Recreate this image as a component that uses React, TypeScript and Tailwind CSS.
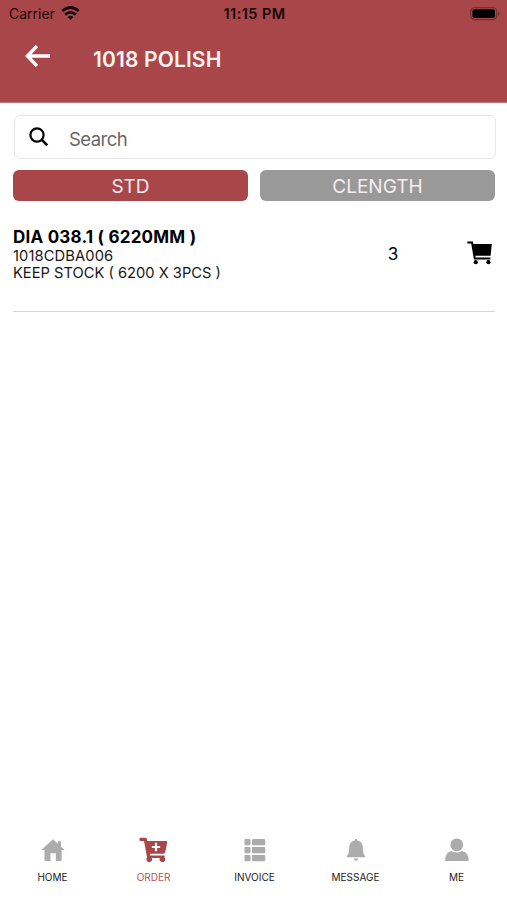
import type { ReactNode } from "react";

const HomeIcon = () => (
  <svg width="24" height="24" viewBox="0 0 24 24" fill="currentColor">
    <path d="M12 1.2 L17 5.8 V3.2 H20 V8.7 L23.7 12 H20.6 V22.2 Q20.6 23 19.8 23 H14.8 V15.3 H9.4 V23 H4.3 Q3.5 23 3.5 22.2 V12 H0.3 Z" />
  </svg>
);

const OrderIcon = () => (
  <svg width="29" height="26" viewBox="0 0 29 26" fill="currentColor">
    <path d="M1.5 0.8 H6.3 Q7.5 0.8 7.9 2.2 L8.2 3.9 H27.2 Q28.6 3.9 28.3 5.3 L26.1 15.6 Q25.8 16.7 24.6 16.7 H10.8 L11.2 18.4 H24.6 Q25.9 18.4 25.7 19.6 L25.5 20.5 A2.8 2.8 0 1 1 21 20.9 H12.6 A2.8 2.8 0 1 1 8.1 20.6 L5 4 H1.5 Q0.5 4 0.5 3 V1.8 Q0.5 0.8 1.5 0.8 Z" />
    <path d="M17 5.8 V14.2 M12.8 10 H21.2" stroke="white" strokeWidth="2.2" />
  </svg>
);

const InvoiceIcon = () => (
  <svg width="22" height="24" viewBox="0 0 22 24" fill="currentColor">
    <rect x="0.5" y="1" width="6" height="6.2" rx="1" />
    <rect x="8" y="1" width="13.2" height="6.2" rx="1" />
    <rect x="0.5" y="9" width="6" height="6.2" rx="1" />
    <rect x="8" y="9" width="13.2" height="6.2" rx="1" />
    <rect x="0.5" y="17" width="6" height="6.2" rx="1" />
    <rect x="8" y="17" width="13.2" height="6.2" rx="1" />
  </svg>
);

const BellIcon = () => (
  <svg width="20" height="24" viewBox="0 0 20 24" fill="currentColor">
    <path d="M10 0.8 Q11.3 0.8 11.3 2.4 Q16.5 3.6 16.8 9 C17 14.5 17.2 16 19.2 18.2 Q19.7 19.3 18.6 19.3 H1.4 Q0.3 19.3 0.8 18.2 C2.8 16 3 14.5 3.2 9 Q3.5 3.6 8.7 2.4 Q8.7 0.8 10 0.8 Z" />
    <path d="M7.8 20.6 H12.2 Q11.8 23 10 23 Q8.2 23 7.8 20.6 Z" />
  </svg>
);

const PersonIcon = () => (
  <svg width="24" height="24" viewBox="0 0 24 24" fill="currentColor">
    <circle cx="11.8" cy="6.8" r="6.4" />
    <path d="M0.2 22 C0.2 17 2.8 13.6 6.5 12.9 Q11.8 16.2 17.1 12.9 C21 13.6 23.7 17 23.7 22 Q23.7 23.1 22.6 23.1 H1.3 Q0.2 23.1 0.2 22 Z" />
  </svg>
);

const CartIcon = () => (
  <svg width="26" height="24" viewBox="0 0 26 24">
    <path d="M0.3 1.4 H5 L7.8 17.6 H23.4" fill="none" stroke="black" strokeWidth="2" />
    <path d="M5.4 3 H24.8 L23.6 14.8 H7.5 Z" />
    <circle cx="8.8" cy="21.2" r="2.1" />
    <circle cx="21.4" cy="21.2" r="2.1" />
  </svg>
);

const StatusBar = () => (
  <div className="flex h-[27px] items-center justify-between pl-[9px] pr-[7px] text-[14px] text-[#170606]">
    <div className="flex w-40 items-center gap-[6px]">
      <span>Carrier</span>
      <svg width="19" height="14" viewBox="0 0 19 14" fill="none" stroke="currentColor" strokeWidth="2.7" className="-mt-px">
        <path d="M1.2 5 Q9.5 -2 17.8 5" />
        <path d="M4.1 8.6 Q9.5 4 14.9 8.6" />
        <path d="M6.6 11 Q9.5 8.3 12.4 11 L9.5 14 Z" fill="currentColor" stroke="none" />
      </svg>
    </div>
    <span className="text-[14.5px] font-semibold tracking-[0.03em]">11:15 PM</span>
    <div className="flex w-40 justify-end">
      <svg width="30" height="14" viewBox="0 0 30 14">
        <rect x="0.8" y="0.6" width="25.8" height="12" rx="3.6" fill="none" stroke="#713034" strokeWidth="1.2" />
        <rect x="2.4" y="2.2" width="22.6" height="8.8" rx="2" fill="black" />
        <path d="M28 4.5 Q29.6 5 29.6 6.6 Q29.6 8.2 28 8.7 Z" fill="#713034" />
      </svg>
    </div>
  </div>
);

const Header = () => (
  <header className="h-[103px] border-b border-[#bd777a] bg-[#a94649]">
    <StatusBar />
    <div className="flex h-16 items-center pl-[25px] text-white">
      <svg width="26" height="24" viewBox="0 0 26 24" fill="none" stroke="currentColor" strokeWidth="3.4" className="-mt-[6px]">
        <path d="M25 12 H2.5 M12 2 L2.5 12 L12 22" />
      </svg>
      <h1 className="ml-[42px] mt-px text-[21px] font-semibold tracking-[0.006em] text-[#fdf3f1]">1018 POLISH</h1>
    </div>
  </header>
);

const Tab = ({ label, icon, active = false }: { label: string; icon: ReactNode; active?: boolean }) => (
  <div className={`flex flex-1 flex-col items-center ${active ? "text-[#a94649]" : "text-[#acacac]"}`}>
    <div className="flex h-[26px] items-center">{icon}</div>
    <span className={`mt-[7px] text-[10px] leading-[14px] ${active ? "text-[#b45257]" : "text-[#222222]"}`}>{label}</span>
  </div>
);

export default function App() {
  return (
    <div className="flex h-[900px] w-[507px] flex-col overflow-hidden bg-white font-['Inter',sans-serif] text-black">
      <Header />

      <main className="flex-1 pl-[13px] pr-3">
        {/* Search */}
        <div className="mt-[12px] ml-px mr-[-1px] flex h-[44px] items-center rounded-[6px] border-[1.5px] border-[#e6e6e6] pl-[14px]">
          <svg width="20" height="20" viewBox="0 0 20 20" fill="none" stroke="black" strokeWidth="2.2" className="-mt-px">
            <circle cx="8" cy="8" r="6.6" />
            <path d="M12.6 12.6 L18.3 18.3" strokeWidth="2.6" />
          </svg>
          <span className="ml-[20px] mt-[5px] text-[18.5px] tracking-[-0.03em] text-[#666666]">Search</span>
        </div>

        {/* Length type */}
        <div className="mt-[11px] flex gap-3 text-[19px] text-[#f6eded]">
          <button className="h-[31px] flex-1 rounded-[6px] bg-[#a94649] pt-[3px] leading-7">STD</button>
          <button className="h-[31px] flex-1 rounded-[6px] bg-[#999999] pt-[3px] leading-7">CLENGTH</button>
        </div>

        {/* Stock item */}
        <div className="flex h-[111px] border-b-[1.5px] border-[#d5d5d5] pt-[26px]">
          <div className="w-[360px]">
            <h2 className="text-[17px] font-bold leading-5 tracking-[0.013em]">DIA 038.1 ( 6220MM )</h2>
            <p className="text-[14.7px] leading-[18px] tracking-[0.008em] text-[#171717]">1018CDBA006</p>
            <p className="text-[14.7px] leading-[17px] text-[#171717]">KEEP STOCK ( 6200 X 3PCS )</p>
          </div>
          <span className="w-10 pt-[15px] text-center text-[17px] leading-6">3</span>
          <div className="ml-auto pr-[2px] pt-[14px]">
            <CartIcon />
          </div>
        </div>
      </main>

      <nav className="flex h-[63px] shrink-0 pl-[2px]">
        <Tab label="HOME" icon={<HomeIcon />} />
        <Tab label="ORDER" icon={<OrderIcon />} active />
        <Tab label="INVOICE" icon={<InvoiceIcon />} />
        <Tab label="MESSAGE" icon={<BellIcon />} />
        <Tab label="ME" icon={<PersonIcon />} />
      </nav>
    </div>
  );
}
